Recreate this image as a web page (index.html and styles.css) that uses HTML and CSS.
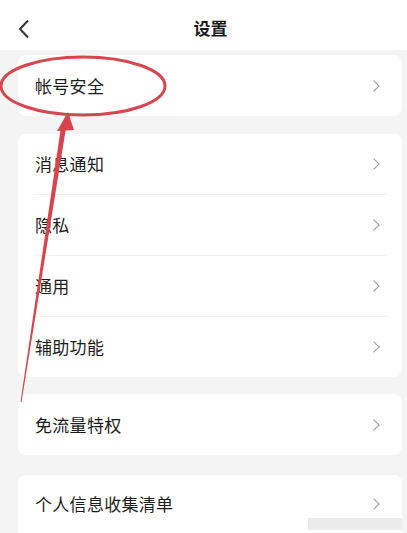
FILE: index.html
```html
<!DOCTYPE html>
<html lang="zh-CN">
<head>
<meta charset="utf-8">
<title>设置</title>
<link rel="stylesheet" href="styles.css">
</head>
<body>
<div class="page">
  <header class="topbar">
    <span class="back">
      <svg width="12" height="20" viewBox="0 0 12 20"><path d="M10 1.5 L2 10 L10 18.5" fill="none" stroke="#333" stroke-width="2"/></svg>
    </span>
    <h1 class="title">设置</h1>
  </header>

  <section class="card card-first">
    <div class="row"><span class="label">帐号安全</span><span class="chev"></span></div>
  </section>

  <section class="card card-group">
    <div class="row"><span class="label">消息通知</span><span class="chev"></span></div>
    <div class="row"><span class="label">隐私</span><span class="chev"></span></div>
    <div class="row"><span class="label">通用</span><span class="chev"></span></div>
    <div class="row"><span class="label">辅助功能</span><span class="chev"></span></div>
  </section>

  <section class="card card-third">
    <div class="row"><span class="label">免流量特权</span><span class="chev"></span></div>
  </section>

  <section class="card card-last">
    <div class="row"><span class="label">个人信息收集清单</span><span class="chev"></span></div>
  </section>

  <svg class="markup" width="407" height="533" viewBox="0 0 407 533">
    <ellipse cx="83" cy="86" rx="82" ry="29" fill="none" stroke="#d6464f" stroke-width="3"/>
    <polygon points="20.5,402 21.5,402 66,128 61,127" fill="#d9434c"/>
    <polygon points="68,112 57,131 74,130" fill="#d9434c"/>
  </svg>
  <div class="wm"></div>
</div>
</body>
</html>
```
FILE: styles.css
```css
html, body {
  margin: 0;
  padding: 0;
  background: #f4f4f4;
}
.page {
  position: relative;
  width: 407px;
  height: 533px;
  overflow: hidden;
  background: #f4f4f4;
  font-family: "Noto Sans CJK SC", "Noto Sans", sans-serif;
  color: #1c1c1c;
}
.topbar {
  height: 50px;
  background: #fff;
  display: flex;
  align-items: flex-start;
  position: relative;
}
.back {
  display: flex;
  margin-left: 18px;
  margin-top: 19px;
  width: 12px;
  height: 20px;
}
.title {
  margin: 0;
  position: absolute;
  left: 0;
  right: 0;
  top: 16px;
  padding-left: 14px;
  text-align: center;
  font-size: 17px;
  line-height: 24px;
  font-weight: 700;
  pointer-events: none;
}
.card {
  background: #fff;
  border-radius: 8px;
  margin-left: 18px;
  margin-right: 5px;
}
.card-first { margin-top: 5px; }
.card-group { margin-top: 18px; }
.card-third { margin-top: 17px; }
.card-last { margin-top: 20px; height: 80px; }
.row {
  height: 61px;
  display: flex;
  align-items: center;
  justify-content: space-between;
  padding-left: 17px;
  padding-right: 22px;
  position: relative;
}
.card-group .row { height: 60px; }
.card-group .row + .row { border-top: 1px solid transparent; }
.card-group .row + .row::before {
  content: "";
  position: absolute;
  top: -1px;
  left: 17px;
  right: 15px;
  height: 1px;
  background: #f1f1f1;
}
.label {
  font-size: 17px;
  line-height: 24px;
  letter-spacing: 0.3px;
}
.chev {
  width: 7px;
  height: 7px;
  border-top: 1.3px solid #9d9d9d;
  border-right: 1.3px solid #9d9d9d;
  transform: rotate(45deg);
  margin-right: 2px;
}
.card-last .row { height: 58px; }
.markup {
  position: absolute;
  left: 0;
  top: 0;
  pointer-events: none;
}
.wm {
  position: absolute;
  left: 308px;
  top: 518px;
  width: 94px;
  height: 12px;
  background: #ececec;
}
```
